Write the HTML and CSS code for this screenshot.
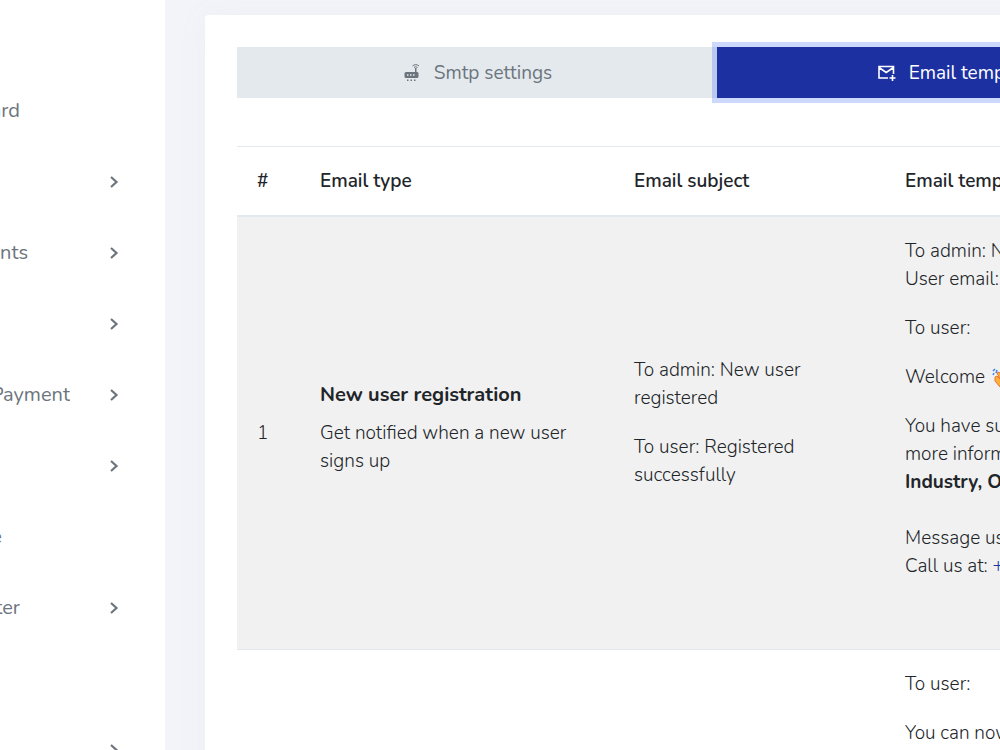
FILE: index.html
```
<!DOCTYPE html>
<html lang="en">
<head>
<meta charset="utf-8">
<title>Email templates</title>
<link rel="stylesheet" href="styles.css">
</head>
<body>
<svg class="defs" aria-hidden="true"><symbol id="chevron" viewBox="0 0 12 14"><path d="M3 2l5.500 5L3 12" fill="none" stroke="currentColor" stroke-width="2.200"/></symbol></svg>
<div class="layout">
  <nav class="sidebar">
    <a class="item" href="#"><span class="label label-md">ard</span></a>
    <a class="item" href="#" aria-label="Submenu"><svg class="chevron"><use href="#chevron"/></svg></a>
    <a class="item" href="#"><span class="label label-lg">nts</span><svg class="chevron"><use href="#chevron"/></svg></a>
    <a class="item" href="#" aria-label="Submenu"><svg class="chevron"><use href="#chevron"/></svg></a>
    <a class="item" href="#"><span class="label label-xl">Payment</span><svg class="chevron"><use href="#chevron"/></svg></a>
    <a class="item" href="#" aria-label="Submenu"><svg class="chevron"><use href="#chevron"/></svg></a>
    <a class="item" href="#"><span class="label label-sm">e</span></a>
    <a class="item" href="#"><span class="label label-md">ter</span><svg class="chevron"><use href="#chevron"/></svg></a>
    <a class="item" href="#" aria-label="Page"></a>
    <a class="item" href="#" aria-label="Submenu"><svg class="chevron"><use href="#chevron"/></svg></a>
  </nav>
  <main class="content">
    <section class="card">
      <div class="tabs">
        <button class="tab" type="button">
          <svg class="tab-icon" viewBox="0 0 20 20" fill="currentColor"><path d="M4 9h9V5h1.500v4A1.500 1.500 0 0 1 16.500 10.500v3A1.500 1.500 0 0 1 15 15H4a1.500 1.500 0 0 1-1.500-1.500v-3A1.500 1.500 0 0 1 4 9z"/><path d="M5 11.300h1.500v1.500H5zM8 11.300h1.500v1.500H8zM11 11.300h1.500v1.500H11z" fill="#e4e9ed"/><path d="M5 16.500h1.500V18H5zM8.500 16.500H10V18H8.500zM12 16.500h1.500V18H12z"/><path d="M12 4.500a2.500 2.500 0 0 1 3.500 0M10.500 3a4.600 4.600 0 0 1 6.500 0" fill="none" stroke="currentColor"/></svg>
          <span>Smtp settings</span>
        </button>
        <button class="tab tab-active" type="button">
          <svg class="tab-icon" viewBox="0 0 20 20" fill="none" stroke="currentColor" stroke-width="1.600"><path d="M11 15H2V3.500h14.500V11M2 4.500l7.200 5 7.300-5M15.500 12v6M12.500 15h6"/></svg>
          <span>Email template</span>
        </button>
      </div>
      <table class="table">
        <thead>
          <tr><th class="col-num">#</th><th class="col-type">Email type</th><th class="col-subject">Email subject</th><th>Email template</th></tr>
        </thead>
        <tbody>
          <tr class="striped">
            <td>1</td>
            <td><h2 class="type-name">New user registration</h2><p class="type-text">Get notified when a new user signs up</p></td>
            <td><p>To admin: New user registered</p><p>To user: Registered successfully</p></td>
            <td class="template">
              <p>To admin: New<br>User email:</p>
              <p>To user:</p>
              <p>Welcome <svg class="wave" viewBox="0 0 22 22"><path d="M5 10l2-1 3 3-3-6 2-1 5 6 1-4 2 1 2 7-4 6-5-1-5-6z" fill="#fbb03b" stroke="#e8743b"/><path d="M3 8l1-2M6 6l1-3M3 4l2-2" stroke="#3c82e8" stroke-width="1.500"/></svg></p>
              <p>You have successfully<br>more information<br><strong>Industry, Or</strong><br><br>Message us<br>Call us at: <a class="link" href="#">+</a></p>
              <p><br></p>
            </td>
          </tr>
          <tr>
            <td></td><td></td><td></td>
            <td class="template"><p>To user:</p><p>You can now</p></td>
          </tr>
        </tbody>
      </table>
    </section>
  </main>
</div>
</body>
</html>
```
FILE: styles.css
```
* { box-sizing: border-box; }
body {
  margin: 0;
  height: 100vh;
  overflow: hidden;
  background: #f3f4f9;
  color: #212529;
  font: 19px/28px Nunito, Lato, sans-serif;
}
.defs { display: none; }
.layout { display: flex; height: 100vh; overflow: hidden; }
.sidebar {
  flex: 0 0 165px;
  padding-top: 75px;
  background: #fff;
}
.item {
  display: flex;
  align-items: center;
  height: 71px;
  padding-right: 45px;
  color: #6c757d;
  text-decoration: none;
}
.label {
  display: flex;
  justify-content: flex-end;
  overflow: hidden;
  font-size: 20px;
}
.label-sm { width: 2px; }
.label-md { width: 20px; }
.label-lg { width: 28px; }
.label-xl { width: 70px; }
.chevron { width: 12px; height: 14px; margin-left: auto; }
.content { flex: 1; min-width: 0; padding: 15px 40px; }
.card {
  min-width: 1024px;
  padding: 32px;
  border-radius: 4px;
  background: #fff;
  box-shadow: 0 0 32px rgba(154, 161, 171, .05);
}
.tabs { display: grid; grid-template-columns: 1fr 1fr; margin-bottom: 48px; }
.tab {
  display: flex;
  align-items: center;
  justify-content: center;
  gap: 12px;
  height: 51px;
  padding: 0 16px;
  border: 0;
  background: #e4e9ed;
  color: #6c757d;
  font: inherit;
}
.tab-active {
  background: #1c30a1;
  color: #fff;
  box-shadow: 0 0 0 5px rgba(55, 105, 245, .25);
}
.tab-icon { width: 20px; height: 20px; }
.table {
  width: 100%;
  table-layout: fixed;
  border-spacing: 0;
}
.table th, .table td {
  padding: 20px;
  border-top: 1px solid #e3eaef;
  text-align: left;
  vertical-align: middle;
}
.table td { font-weight: 350; }
.table th { border-bottom: 2px solid #e3eaef; font-weight: 650; }
.table .striped td { border-top: 0; background: #f1f1f1; }
.col-num { width: 63px; }
.col-type { width: 314px; }
.col-subject { width: 271px; }
.table p { margin: 0 0 21px; }
.table .template { white-space: nowrap; }
.table strong { font-weight: 700; }
.template p:last-child { margin-bottom: 0; }
.type-name { margin: 0 0 10px; font-size: 20px; line-height: 28px; font-weight: 700; }
.table .type-text { margin-bottom: 10px; }
.wave { width: 22px; height: 22px; vertical-align: middle; }
.link { color: #1c30a1; text-decoration: none; }
```
